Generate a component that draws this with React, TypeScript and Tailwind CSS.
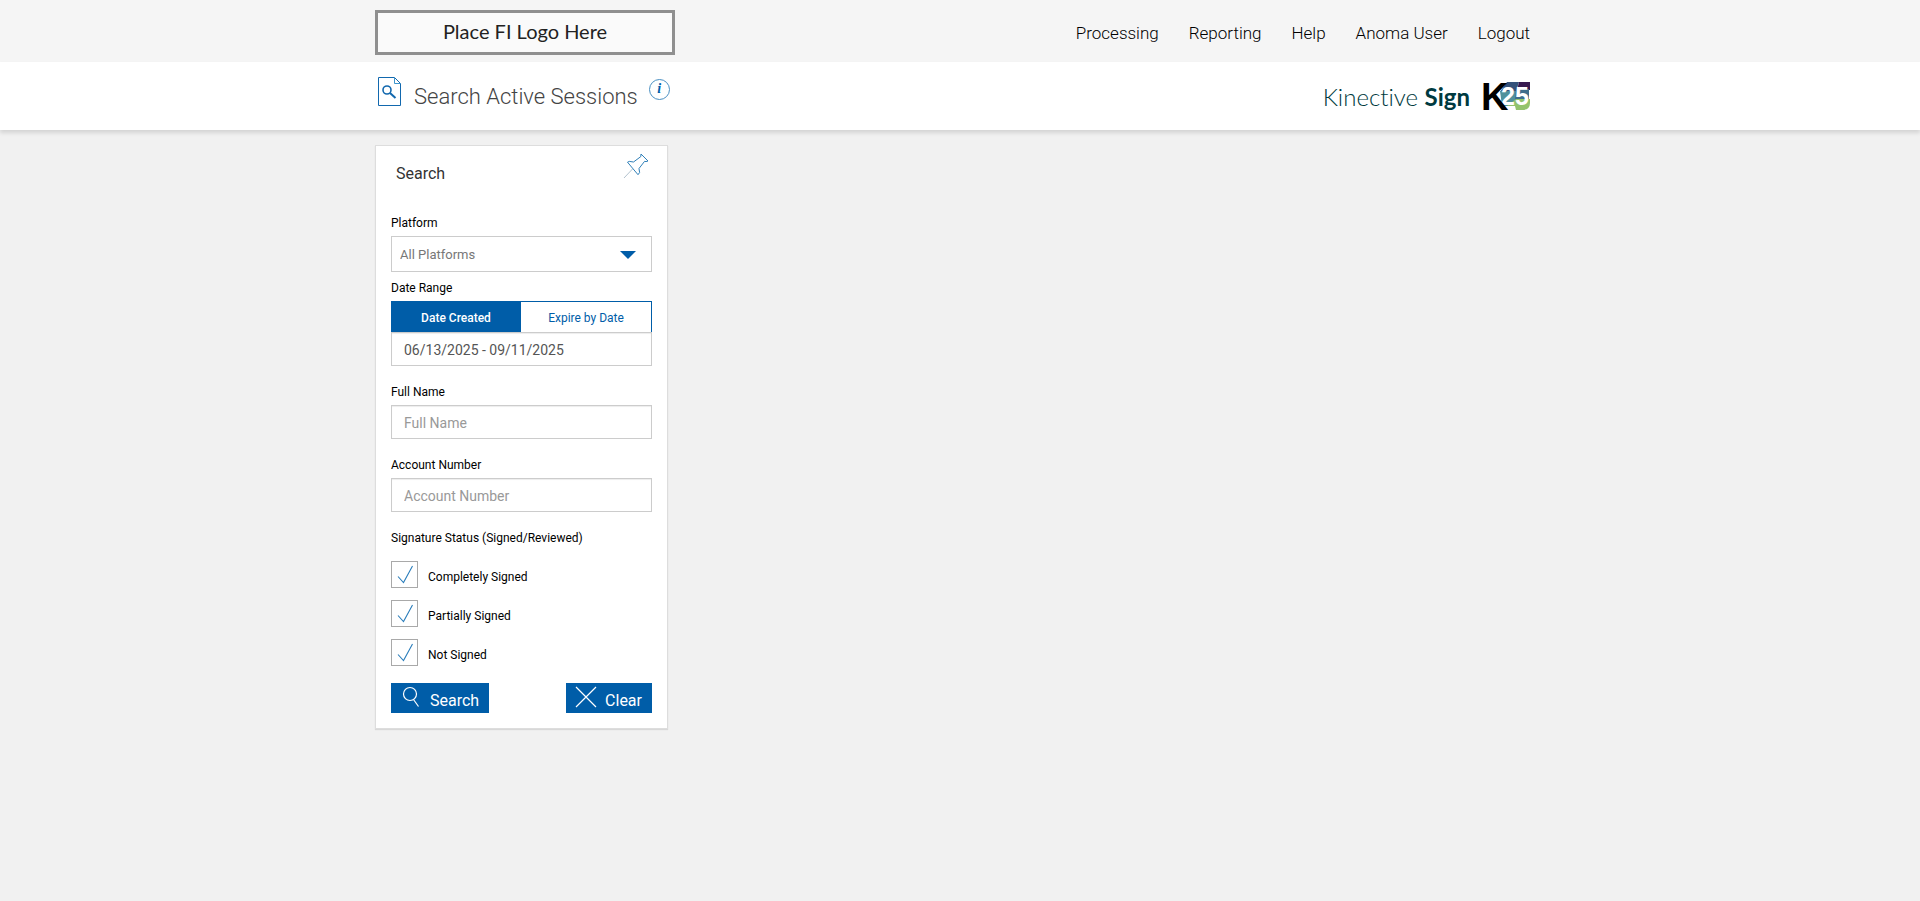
import { useState } from "react";

const navLinks = ["Processing", "Reporting", "Help", "Anoma User", "Logout"];

const statuses = ["Completely Signed", "Partially Signed", "Not Signed"];

function SearchPageIcon() {
  return (
    <svg width="24" height="30" viewBox="0 0 24 30" fill="none" stroke="#1268ae" aria-hidden="true">
      <path d="M.5.5h16l6 6v22H.5z" />
      <path d="M16.5.5v6h6" stroke="#3d95cc" />
      <circle cx="9" cy="13" r="4" strokeWidth="1.6" />
      <path d="M12 16l5.5 5" strokeWidth="2" />
    </svg>
  );
}

function PinIcon() {
  return (
    <svg width="26" height="26" viewBox="0 0 26 26" fill="none" stroke="#2f7fb8" aria-hidden="true">
      <path d="M18 1l7 7-2 .6-1.400-.3-5.600 7.200.6 4-1.600 2.200L4.500 9.200l1.800-.8 4.200.6 7.300-5.400z" />
      <path d="M9.500 16L1 25" stroke="#b3c3cf" />
    </svg>
  );
}

function K25Logo() {
  return (
    <svg width="46" height="28" viewBox="0 0 46 28" className="overflow-visible" role="img" aria-label="K25">
      <path d="M23 0h12l-3 10H16z" fill="#35527a" />
      <path d="M16 9h16v9l-8 6h-6z" fill="#4f919c" />
      <path d="M35 0h11v8H33z" fill="#37194f" />
      <path d="M32 7h13v11H31z" fill="#3f6d8c" />
      <path d="M23 24l9-7h14v4q0 7-8 7h-6l-1-4z" fill="#93c36c" />
      <text x="17" y="23" fontSize="25" fontWeight="700" fill="#fff" className="font-['Liberation_Sans',sans-serif]">
        25
      </text>
      <text x="-3" y="28" fontSize="38" fontWeight="700" fill="#000" className="font-['Liberation_Sans',sans-serif]">
        K
      </text>
    </svg>
  );
}

function TextField({ id, label }: { id: string; label: string }) {
  return (
    <div className="mt-4">
      <label htmlFor={id} className="block h-[23px] text-xs leading-5">
        {label}
      </label>
      <input
        id={id}
        type="text"
        placeholder={label}
        className="block h-[34px] w-full border border-[#ccc] bg-white px-3 pt-[2px] text-sm text-[#555] shadow-[inset_0_1px_1px_rgba(0,0,0,0.075)] outline-none placeholder:text-[#999]"
      />
    </div>
  );
}

function StatusCheckbox({ label }: { label: string }) {
  return (
    <label className="flex h-[27px] items-center gap-[10px] text-xs">
      <span className="grid">
        <input
          type="checkbox"
          defaultChecked
          className="peer col-start-1 row-start-1 size-[27px] appearance-none border border-[#a9a9a9] bg-white"
        />
        <svg
          width="27"
          height="27"
          viewBox="0 0 27 27"
          fill="none"
          stroke="#2a7dbb"
          strokeWidth="1.1"
          className="pointer-events-none invisible col-start-1 row-start-1 peer-checked:visible"
          aria-hidden="true"
        >
          <path d="M7 15.500l5.500 6L21.500 5" />
        </svg>
      </span>
      <span className="pt-1">{label}</span>
    </label>
  );
}

export default function App() {
  const [dateType, setDateType] = useState("created");

  const tab = "h-[31px] flex-1 border-t border-[#005da8] pt-px text-xs";
  const activeTab = "bg-[#005da8] font-medium text-white";
  const idleTab = "border-r bg-white text-[#005da8]";

  return (
    <div className="min-h-screen bg-[#f1f1f1] font-['Roboto',sans-serif] text-black">
      <header className="bg-[#f5f5f5]">
        <div className="mx-auto flex h-[62px] max-w-[1170px] items-center justify-between pr-[15px]">
          <div className="mt-[3px] flex h-[45px] w-[300px] items-center justify-center border-3 border-[#8f8f8f] bg-[#fafafa] pb-1 font-['Lato',sans-serif] text-xl text-[#222]">
            Place FI Logo Here
          </div>
          <nav className="flex gap-[30px] pt-[6px] text-[17px] font-light">
            {navLinks.map((name) => (
              <a key={name} href="#">
                {name}
              </a>
            ))}
          </nav>
        </div>
      </header>

      <div className="bg-white shadow-[0_3px_4px_rgba(0,0,0,0.12)]">
        <div className="mx-auto flex h-[68px] max-w-[1170px] items-center justify-between pr-[15px]">
          <div className="flex items-center pl-[3px]">
            <div className="pb-2">
              <SearchPageIcon />
            </div>
            <h1 className="ml-3 text-[22px] font-light text-[#444]">Search Active Sessions</h1>
            <button
              type="button"
              aria-label="Information"
              className="mb-[14px] ml-[11px] flex size-[21px] items-center justify-center rounded-full border border-[#4a8fc2] font-['Liberation_Serif',serif] text-sm font-bold text-[#005da8] italic"
            >
              i
            </button>
          </div>
          <div className="flex items-center gap-[14px] text-[#003a40]">
            <span className="pt-px font-['Lato',sans-serif] text-2xl font-light [font-variant-ligatures:none]">
              Kinective <b className="font-bold">Sign</b>
            </span>
            <K25Logo />
          </div>
        </div>
      </div>

      <main className="mx-auto max-w-[1170px] pt-[15px]">
        <form
          onSubmit={(e) => e.preventDefault()}
          className="w-[293px] border border-[#ddd] bg-white px-[15px] pb-[15px] shadow-[0_1px_1px_rgba(0,0,0,0.1)]"
        >
          <div className="flex h-[66px] justify-between pr-[3px] pl-[5px]">
            <h2 className="pt-4 text-base leading-6 text-[#333]">Search</h2>
            <button type="button" aria-label="Pin search" className="h-[26px] pt-[7px]">
              <PinIcon />
            </button>
          </div>

          <label htmlFor="platform" className="block h-6 pt-px text-xs leading-5">
            Platform
          </label>
          <div className="grid items-center">
            <select
              id="platform"
              className="col-start-1 row-start-1 h-9 w-full appearance-none border border-[#ccc] bg-white px-2 pt-[2px] text-[13px] text-[#777]"
            >
              <option>All Platforms</option>
            </select>
            <svg
              width="16"
              height="10"
              viewBox="0 0 16 10"
              className="pointer-events-none col-start-1 row-start-1 mr-4 justify-self-end"
              aria-hidden="true"
            >
              <path d="M0 2h16L8 10z" fill="#005da8" />
            </svg>
          </div>

          <label htmlFor="dates" className="mt-[6px] block h-[23px] text-xs leading-5">
            Date Range
          </label>
          <div className="flex">
            <button
              type="button"
              onClick={() => setDateType("created")}
              className={`${tab} ${dateType === "created" ? activeTab : idleTab}`}
            >
              Date Created
            </button>
            <button
              type="button"
              onClick={() => setDateType("expire")}
              className={`${tab} ${dateType === "expire" ? activeTab : idleTab}`}
            >
              Expire by Date
            </button>
          </div>
          <input
            id="dates"
            type="text"
            defaultValue="06/13/2025 - 09/11/2025"
            className="block h-[34px] w-full border border-[#ccc] bg-white px-3 pt-[2px] text-sm text-[#555] shadow-[inset_0_1px_1px_rgba(0,0,0,0.075)] outline-none"
          />

          <TextField id="full-name" label="Full Name" />
          <TextField id="account-number" label="Account Number" />

          <fieldset className="mt-4">
            <legend className="text-xs leading-5">Signature Status (Signed/Reviewed)</legend>
            <div className="flex flex-col gap-3 pt-[13px]">
              {statuses.map((name) => (
                <StatusCheckbox key={name} label={name} />
              ))}
            </div>
          </fieldset>

          <div className="mt-[17px] flex justify-between text-base text-white">
            <button type="submit" className="flex h-[30px] items-center gap-[11px] bg-[#005da8] pr-[10px] pl-[11px]">
              <svg width="17" height="22" viewBox="0 0 17 22" fill="none" stroke="#fff" strokeWidth="1.2" className="mb-[2px]" aria-hidden="true">
                <circle cx="8" cy="8" r="6.500" />
                <path d="M11.500 13.500l5 7" />
              </svg>
              <span className="pt-[6px]">Search</span>
            </button>
            <button type="reset" className="flex h-[30px] items-center gap-2 bg-[#005da8] pr-[10px] pl-[9px]">
              <svg width="22" height="22" viewBox="0 0 22 22" fill="none" stroke="#fff" strokeWidth="1.2" className="mb-[2px]" aria-hidden="true">
                <path d="M1 1l20 20M21 1L1 21" />
              </svg>
              <span className="pt-[6px]">Clear</span>
            </button>
          </div>
        </form>
      </main>
    </div>
  );
}
